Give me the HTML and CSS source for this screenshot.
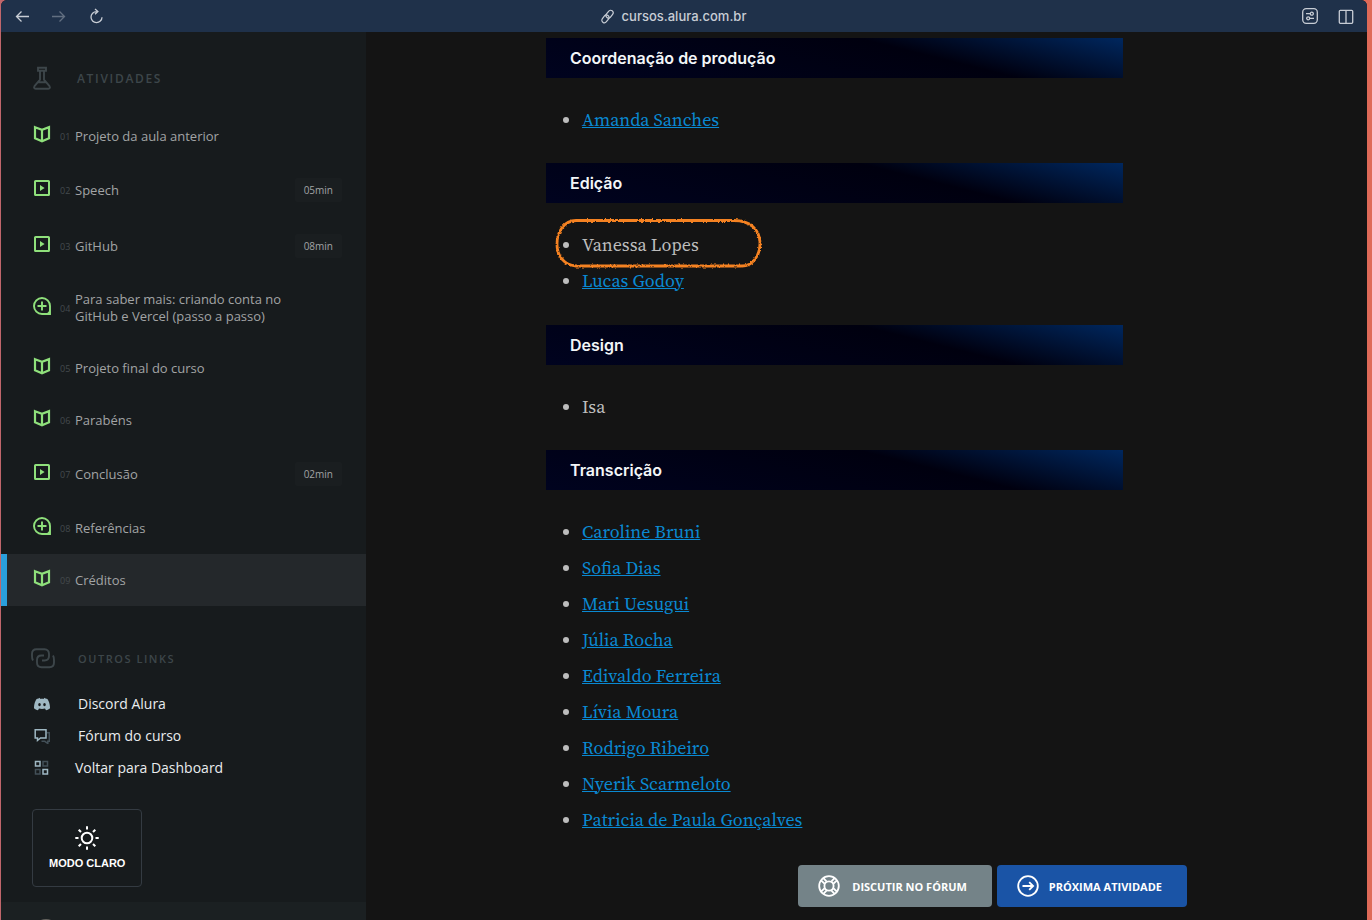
FILE: index.html
```html
<!DOCTYPE html>
<html lang="pt-BR">
<head>
<meta charset="utf-8">
<meta name="viewport" content="width=device-width, initial-scale=1">
<title>Créditos</title>
<link rel="stylesheet" href="styles.css">
</head>
<body>
<svg class="defs" aria-hidden="true">
  <symbol id="book" viewBox="0 0 18 18"><path d="M2 2.200 9 4.800l7-2.600v11.100L9 16.200l-7-2.900zM9 4.800v11.400" fill="none" stroke="currentColor" stroke-width="2.200"/></symbol>
  <symbol id="video" viewBox="0 0 18 18"><rect x="2" y="2" width="14" height="14" rx=".6" fill="none" stroke="currentColor" stroke-width="2"/><path d="M7 6v6l4.600-3z" fill="currentColor"/></symbol>
  <symbol id="plus" viewBox="0 0 18 18"><path d="M17 9v8H9a8 8 0 1 1 8-8z" fill="none" stroke="currentColor" stroke-width="1.900"/><path d="M17 11v6h-6c3 0 6-3 6-6z" fill="currentColor"/><path d="M9 4.500v9M4.500 9h9" fill="none" stroke="currentColor" stroke-width="1.900"/></symbol>
</svg>
<div class="window">
  <header class="toolbar">
    <div class="tools">
      <button class="tool" aria-label="Voltar"><svg viewBox="0 0 16 16"><path d="M15 8.500H2.500M7.500 3.500l-5 5 5 5"/></svg></button>
      <button class="tool tool-off" aria-label="Avançar" disabled><svg viewBox="0 0 16 16"><path d="M1 8.500h12.500M8.500 3.500l5 5-5 5"/></svg></button>
      <button class="tool" aria-label="Recarregar"><svg viewBox="0 0 16 16"><path d="M9.300 3.600H8.500A5.500 5.500 0 1 0 14 9.200M7 1l2.900 2.600L7 6.300"/></svg></button>
    </div>
    <div class="address"><svg viewBox="0 0 16 16"><rect x="7.500" y="1" width="5.400" height="9" rx="2.700" transform="rotate(38 10.200 5.500)"/><rect x="3.100" y="6" width="5.400" height="9" rx="2.700" transform="rotate(38 5.800 10.500)"/></svg><span>cursos.alura.com.br</span></div>
    <div class="tools tools-end">
      <button class="tool" aria-label="Ajustes"><svg viewBox="0 0 16 16"><rect x=".7" y=".7" width="14.600" height="14.600" rx="3.500"/><path d="M4 5.700h4.200M11.500 5.700H12M4 10.300h.6M7.900 10.300H12"/><circle cx="9.800" cy="5.700" r="1.500"/><circle cx="6.200" cy="10.300" r="1.500"/></svg></button>
      <button class="tool" aria-label="Dividir janela"><svg viewBox="0 0 16 16"><rect x="1.300" y="2.300" width="13.400" height="13" rx="1"/><path d="M8 2.300v13"/></svg></button>
    </div>
  </header>
  <div class="page">
    <aside class="sidebar">
      <h2 class="section"><svg viewBox="0 0 24 24"><path d="M8 1.700h8v3H8zM10 4.700v9l-5.500 6.500c-.9 1.300-.4 2.600 1.200 2.600h12.600c1.600 0 2.100-1.300 1.200-2.600L14 13.700v-9M7.800 16.200h8.400"/></svg>Atividades</h2>
      <nav class="activities">
        <a class="activity" href="#"><svg class="kind"><use href="#book"/></svg><span class="num">01</span><span class="name">Projeto da aula anterior</span></a>
        <a class="activity" href="#"><svg class="kind"><use href="#video"/></svg><span class="num">02</span><span class="name">Speech</span><span class="time">05min</span></a>
        <a class="activity" href="#"><svg class="kind"><use href="#video"/></svg><span class="num">03</span><span class="name">GitHub</span><span class="time">08min</span></a>
        <a class="activity" href="#"><svg class="kind"><use href="#plus"/></svg><span class="num">04</span><span class="name">Para saber mais: criando conta no GitHub e Vercel (passo a passo)</span></a>
        <a class="activity" href="#"><svg class="kind"><use href="#book"/></svg><span class="num">05</span><span class="name">Projeto final do curso</span></a>
        <a class="activity" href="#"><svg class="kind"><use href="#book"/></svg><span class="num">06</span><span class="name">Parabéns</span></a>
        <a class="activity" href="#"><svg class="kind"><use href="#video"/></svg><span class="num">07</span><span class="name">Conclusão</span><span class="time">02min</span></a>
        <a class="activity" href="#"><svg class="kind"><use href="#plus"/></svg><span class="num">08</span><span class="name">Referências</span></a>
        <a class="activity active" href="#" aria-current="page"><svg class="kind"><use href="#book"/></svg><span class="num">09</span><span class="name">Créditos</span></a>
      </nav>
      <h2 class="section section-links"><svg viewBox="0 0 24 24"><path d="M2 14.500c-1-1.500-1-2.500-1-4.500V8c0-3 1.500-4.700 4.500-4.700h8C16.500 3.300 18 5 18 8v2c0 3-1.500 4.500-4.500 4.500H11M22 9.500c1 1.500 1 2.500 1 4.500v2.500c0 3-1.500 4.700-4.500 4.700h-8C7.500 21.200 6 19.500 6 16.500V14c0-3 1.500-4.500 4.500-4.500H13"/></svg>Outros links</h2>
      <nav class="links">
        <a class="link" href="#"><svg viewBox="0 0 16 16"><path fill="#9fb8c3" fill-rule="evenodd" d="M5.800 1.800 5.200 2.200 2.600 3C.9 5.600-.1 8.500 0 12.300 1.200 13.300 2.500 14 4 14.200l1-1.600c1.800.5 4.200.5 6 0l1 1.600c1.500-.2 2.800-.9 4-1.900.1-3.800-.9-6.700-2.600-9.300l-2.600-.8-.6-.4-.6 1.200c-1-.2-2.200-.2-3.200 0zM5.500 7a1.300 1.600 0 1 1 0 3.200 1.300 1.600 0 0 1 0-3.200zm5 0a1.300 1.600 0 1 1 0 3.200 1.300 1.600 0 0 1 0-3.200z"/></svg>Discord Alura</a>
        <a class="link" href="#"><svg viewBox="0 0 16 16" fill="none" stroke-width="1.500"><path stroke="#435058" d="M13 4.800h2.300v8.500h-1.500v2.200l-3-2.200H7.500"/><path stroke="#9fb8c3" d="M1.200 1.700h10.800v8.300H6.500L3.500 12.500V10H1.200z"/></svg>Fórum do curso</a>
        <a class="link link-wide" href="#"><svg viewBox="0 0 16 16" fill="none" stroke-width="1.500"><path stroke="#9fb8c3" d="M1.500 1.500h4.500v4.500H1.500zM9 9.500h4.500v4.500H9z"/><path stroke="#435058" d="M9 1.500h4.500v4.500H9zM1.500 9.500h4.500v4.500H1.500z"/></svg>Voltar para Dashboard</a>
      </nav>
      <button class="theme"><svg viewBox="0 0 24 24"><circle cx="12" cy="12" r="5.300"/><path d="M12 .3v3.200M12 20.500v3.200M.3 12h3.200M20.500 12h3.200M3.700 3.700 6 6M18 18l2.300 2.300M3.700 20.300 6 18M18 6l2.300-2.300"/></svg>MODO CLARO</button>
      <div class="profile"><span class="avatar"></span></div>
    </aside>
    <main class="content">
      <article class="credits">
        <h2 class="role">Coordenação de produção</h2>
        <ul><li><a href="#">Amanda Sanches</a></li></ul>
        <h2 class="role">Edição</h2>
        <ul>
          <li class="marked">Vanessa Lopes<svg class="scribble" viewBox="0 0 210 52" aria-hidden="true"><filter id="rough" filterUnits="userSpaceOnUse" x="0" y="-4" width="210" height="60"><feTurbulence type="fractalNoise" baseFrequency=".45" numOctaves="2" seed="4"/><feDisplacementMap in="SourceGraphic" scale="3" xChannelSelector="R" yChannelSelector="G"/></filter><path filter="url(#rough)" d="M22 3.500h158c16 0 26 9 26 22.500s-8 23-18 23H22C10 48 3 39 3 27S10 3.500 22 3.500z" fill="none" stroke="#f58220" stroke-width="2.800"/></svg></li>
          <li><a href="#">Lucas Godoy</a></li>
        </ul>
        <h2 class="role">Design</h2>
        <ul><li>Isa</li></ul>
        <h2 class="role">Transcrição</h2>
        <ul>
          <li><a href="#">Caroline Bruni</a></li>
          <li><a href="#">Sofia Dias</a></li>
          <li><a href="#">Mari Uesugui</a></li>
          <li><a href="#">Júlia Rocha</a></li>
          <li><a href="#">Edivaldo Ferreira</a></li>
          <li><a href="#">Lívia Moura</a></li>
          <li><a href="#">Rodrigo Ribeiro</a></li>
          <li><a href="#">Nyerik Scarmeloto</a></li>
          <li><a href="#">Patricia de Paula Gonçalves</a></li>
        </ul>
      </article>
      <div class="actions">
        <button class="action"><svg viewBox="0 0 24 24"><circle cx="12" cy="12" r="10.700"/><circle cx="12" cy="12" r="5"/><path d="M7.300 9.500 3.600 6.200M9.500 7.300 6.200 3.600M14.500 7.300l3.300-3.700M16.700 9.500l3.700-3.300M16.700 14.500l3.700 3.300M14.500 16.700l3.300 3.700M9.500 16.700l-3.300 3.700M7.300 14.500l-3.700 3.300"/></svg>DISCUTIR NO FÓRUM</button>
        <button class="action action-next"><svg viewBox="0 0 24 24"><circle cx="12" cy="12" r="10.700"/><path d="M6 12h11.500M13.300 7.700l4.300 4.300-4.300 4.300"/></svg>PRÓXIMA ATIVIDADE</button>
      </div>
    </main>
  </div>
</div>
</body>
</html>
```
FILE: styles.css
```css
* { box-sizing: border-box; }
body {
  margin: 0;
  padding: 0 5px 0 1px;
  background: linear-gradient(90deg, #c0666b 0, #df6a58 100%);
  font-family: "Open Sans", "Noto Sans", sans-serif;
  overflow: hidden;
}
a { color: inherit; text-decoration: none; }
button { border: 0; font: inherit; color: inherit; cursor: pointer; }
h2, ul { margin: 0; padding: 0; }
.defs { display: none; }
.window {
  display: flex;
  flex-direction: column;
  height: 100vh;
  border-radius: 6px 6px 0 0;
  overflow: hidden;
  background: #141414;
}

.toolbar {
  display: grid;
  grid-template-columns: 1fr auto 1fr;
  align-items: center;
  flex: none;
  height: 32px;
  padding: 0 13px;
  background: #1f314a;
  color: #c8cdd5;
}
.tools { display: flex; gap: 21px; }
.tools-end { justify-content: flex-end; gap: 20px; }
.tool { display: flex; padding: 0; background: none; }
.tool-off { opacity: .4; }
.toolbar svg { width: 16px; height: 16px; fill: none; stroke: currentColor; stroke-width: 1.300; }
.address {
  display: flex;
  align-items: center;
  gap: 7px;
  padding-right: 22px;
  font: 500 13px/16px Inter, sans-serif;
}
.address svg { width: 15px; height: 15px; }

.page { display: flex; flex: 1; min-height: 0; }
.sidebar {
  display: flex;
  flex-direction: column;
  flex: 0 0 365px;
  overflow: hidden;
  background: #171b1d;
}
.section {
  display: flex;
  align-items: center;
  gap: 23px;
  height: 24px;
  margin: 34px 29px 20px;
  color: #3d464a;
  font-size: 12px;
  font-weight: 600;
  letter-spacing: .14em;
  text-transform: uppercase;
}
.section svg { width: 24px; height: 24px; fill: none; stroke: currentColor; stroke-width: 1.900; }
.section-links { margin: 40px 30px 18px; font-size: 11px; }

.activity {
  display: flex;
  align-items: center;
  min-height: 52px;
  padding: 17px 24px 17px 32px;
  color: #a2a4a5;
  font-size: 13px;
  line-height: 17px;
}
.activity:has(.time) { padding-top: 16px; padding-bottom: 16px; }
.activity.active {
  border-left: 6px solid #2a9fdc;
  padding-left: 26px;
  background: #24282b;
}
.kind { flex: none; width: 18px; height: 18px; margin-top: -4px; color: #8fe07b; }
.num { flex: none; width: 24px; padding-left: 9px; color: #444a4d; font-size: 9px; }
.name { flex: 0 1 220px; }
.time {
  margin-left: auto;
  padding: 0 9px;
  border-radius: 2px;
  background: #1a1e20;
  font-size: 10px;
  line-height: 24px;
}

.links { display: flex; flex-direction: column; padding: 0 33px; }
.link {
  display: flex;
  align-items: center;
  gap: 28px;
  height: 32px;
  color: #e9ecee;
  font-size: 14px;
  line-height: 20px;
}
.link-wide { gap: 25px; }
.link svg { width: 16px; height: 16px; }

.theme {
  display: flex;
  flex-direction: column;
  align-items: center;
  gap: 5px;
  flex: none;
  align-self: flex-start;
  margin: 25px 31px 15px;
  padding: 16px 16px 15px;
  border: 1px solid #343b42;
  border-radius: 4px;
  background: none;
  color: #fff;
  font: bold 11px/16px "Liberation Sans", Arial, sans-serif;
}
.theme svg { width: 24px; height: 24px; fill: none; stroke: #fff; stroke-width: 2; }
.profile { flex: 1 0 18px; padding: 17px 32px 0; background: #1b2022; }
.avatar { display: block; width: 26px; height: 26px; border-radius: 50%; background: #65635f; }

.content { flex: 1; padding: 6px 180px 0; }
.credits { margin-right: 64px; }
.role {
  padding: 8px 24px;
  background: linear-gradient(14deg, #00031f 0, #00000f 64%, #00275e 100%);
  color: #f3f6f8;
  font: 600 16px/24px Inter, sans-serif;
}
.credits ul {
  padding: 24px 0 25px 36px;
  color: #bdbdbd;
  font: 18px/36px "Source Serif Pro", "Source Serif 4", "Liberation Serif", serif;
}
.credits ul:has(li + li) { padding-bottom: 26px; }
.credits a { color: #0a89d2; text-decoration: underline; }
.marked { position: relative; }
.scribble { position: absolute; left: -28px; top: -10px; width: 210px; height: 52px; overflow: visible; }

.actions { display: flex; justify-content: flex-end; gap: 5px; padding-top: 1px; }
.action {
  display: flex;
  align-items: center;
  gap: 12px;
  height: 42px;
  padding: 0 25px 0 20px;
  border-radius: 4px;
  background: #748388;
  color: #fff;
  font-size: 11px;
  font-weight: 700;
  white-space: nowrap;
}
.action-next { gap: 10px; background: #1a54a6; }
.action svg { width: 22px; height: 22px; fill: none; stroke: #fff; stroke-width: 2; }
```
